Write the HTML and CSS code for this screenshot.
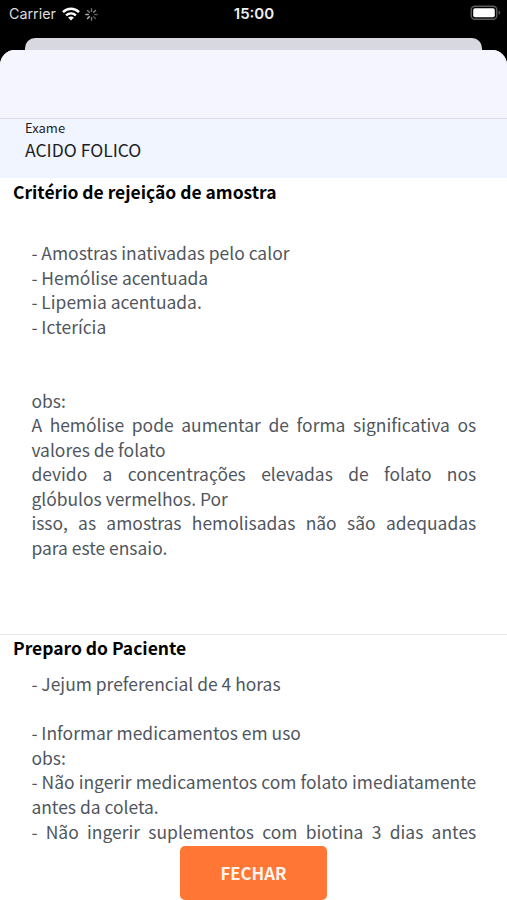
FILE: index.html
```html
<!DOCTYPE html>
<html lang="pt-BR">
<head>
<meta charset="utf-8">
<title>Exame</title>
<link rel="stylesheet" href="styles.css">
</head>
<body>
<div class="screen">
  <header class="status">
    <div class="status-left">
      <span class="carrier">Carrier</span>
      <svg class="wifi" viewBox="0 0 18 14" width="18" height="14"><g fill="none" stroke="#fff" stroke-width="2.5"><path d="M1 5.1C5.6.7 12.4.7 17 5.1"/><path d="M4.1 8.4c2.9-2.6 6.9-2.6 9.8 0"/></g><path d="M6.1 10.6c1.8-1.5 4-1.5 5.8 0L9 13.6z" fill="#fff"/></svg>
      <svg class="spinner" viewBox="-6 -6 12 12" width="13" height="13"><g stroke-width="1.3" stroke-linecap="round"><path d="M0-2.8V-5.2" stroke="#777"/><path d="M2-2l1.7-1.7" stroke="#888"/><path d="M2.8 0h2.4" stroke="#555"/><path d="M2 2l1.7 1.7" stroke="#555"/><path d="M0 2.8v2.4" stroke="#777"/><path d="M-2 2l-1.7 1.7" stroke="#bbb"/><path d="M-2.8 0h-2.4" stroke="#aaa"/><path d="M-2-2l-1.7-1.7" stroke="#777"/></g></svg>
    </div>
    <span class="time">15:00</span>
    <svg class="battery" viewBox="0 0 32 16" width="32" height="16"><rect x="1.2" y="1.2" width="25.6" height="13" rx="3.6" fill="none" stroke="#5c5c5c" stroke-width="1.4"/><rect x="3.2" y="3.2" width="21.6" height="9" rx="1.8" fill="#fff"/><path d="M28.6 5.6c2.2.8 2.2 3.4 0 4.2z" fill="#5c5c5c"/></svg>
  </header>
  <div class="behind"></div>
  <main class="sheet">
    <div class="navbar"></div>
    <section class="exam">
      <div class="exam-label">Exame</div>
      <div class="exam-name">ACIDO FOLICO</div>
    </section>
    <section class="block criteria">
      <h2>Critério de rejeição de amostra</h2>
      <div class="copy">
        <p>- Amostras inativadas pelo calor</p>
        <p>- Hemólise acentuada</p>
        <p>- Lipemia acentuada.</p>
        <p>- Icterícia</p>
        <p class="gap">obs:</p>
        <p>A hemólise pode aumentar de forma significativa os valores de folato</p>
        <p>devido a concentrações elevadas de folato nos glóbulos vermelhos. Por</p>
        <p>isso, as amostras hemolisadas não são adequadas para este ensaio.</p>
      </div>
    </section>
    <section class="block prep">
      <h2>Preparo do Paciente</h2>
      <div class="copy">
        <p>- Jejum preferencial de 4 horas</p>
        <p class="line-gap">- Informar medicamentos em uso</p>
        <p>obs:</p>
        <p>- Não ingerir medicamentos com folato imediatamente antes da coleta.</p>
        <p class="spread">- Não ingerir suplementos com biotina 3 dias antes</p>
      </div>
    </section>
    <footer class="footer"><button class="close" type="button">FECHAR</button></footer>
  </main>
</div>
</body>
</html>
```

FILE: styles.css
```css
* { box-sizing: border-box; margin: 0; padding: 0; }
body { background: #000; font-family: "Noto Sans CJK SC", "Noto Sans", sans-serif; }
.screen { width: 507px; height: 900px; overflow: hidden; display: flex; flex-direction: column; }
.status { height: 38px; flex: none; display: grid; grid-template-columns: 1fr auto 1fr; align-items: start; padding: 5px 5px 0 9px; color: #fff; font-family: Inter, sans-serif; }
.status-left { display: flex; align-items: center; height: 18px; }
.carrier { font-size: 14.3px; line-height: 18px; color: #ddd; }
.wifi { margin-left: 6px; }
.spinner { margin-left: 5px; }
.time { font-size: 15px; line-height: 18px; font-weight: 600; color: #eee; margin-right: 3px; }
.battery { justify-self: end; }
.behind { height: 12px; flex: none; margin: 0 25px; background: #d8d9e0; border-radius: 10px 10px 0 0; }
.sheet { flex: 1; min-height: 0; display: flex; flex-direction: column; background: #fff; border-radius: 15px 15px 0 0; overflow: hidden; }
.navbar { height: 69px; flex: none; background: #f4f5fe; border-bottom: 1px solid #dcdee3; }
.exam { height: 59px; flex: none; background: #f1f5ff; padding-left: 25px; color: #1c1f24; }
.exam-label { font-size: 13px; line-height: 18px; }
.exam-name { font-size: 17.5px; line-height: 25px; }
h2 { font-size: 17.47px; line-height: 27px; font-weight: 700; color: #000; padding-left: 13px; }
.criteria { height: 457px; flex: none; border-bottom: 1px solid #e8e8ea; }
.prep { flex: none; height: 211px; }
.prep h2 { line-height: 26px; }
.copy { margin: 0 30.8px 0 31.4px; font-size: 17.45px; line-height: 24.57px; color: #50565e; text-align: justify; }
.criteria .copy { padding-top: 36.3px; }
.prep .copy { padding-top: 11.2px; }
.gap { margin-top: 49.14px; }
.line-gap { margin-top: 24.57px; }
.spread { text-align-last: justify; }
.footer { flex: none; display: flex; justify-content: center; }
.close { width: 147px; height: 54px; border: 0; border-radius: 5px; background: #ff7635; color: #fff5ee; font-family: inherit; font-size: 16.8px; font-weight: 700; line-height: 24px; }
```
